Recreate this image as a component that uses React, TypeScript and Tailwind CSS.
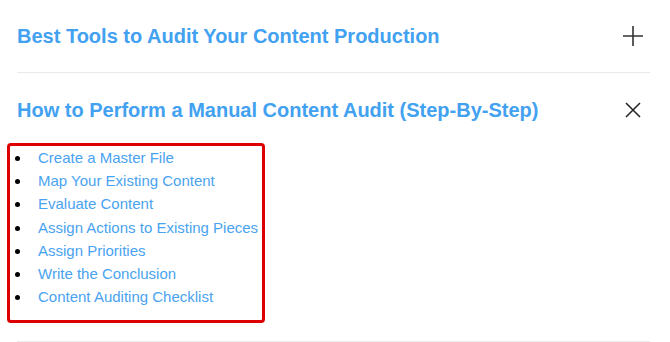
import React from 'react';

const steps = [
  'Create a Master File',
  'Map Your Existing Content',
  'Evaluate Content',
  'Assign Actions to Existing Pieces',
  'Assign Priorities',
  'Write the Conclusion',
  'Content Auditing Checklist',
];

const PlusIcon = () => (
  <svg width="20" height="20" viewBox="0 0 20 20" fill="none" stroke="#333" strokeWidth="1.6">
    <path d="M10 0v20M0 10h20" />
  </svg>
);

const CloseIcon = () => (
  <svg width="16" height="16" viewBox="0 0 16 16" fill="none" stroke="#222" strokeWidth="1.5">
    <path d="M1 1l14 14M15 1L1 15" />
  </svg>
);

const App: React.FC = () => {
  return (
    <div className="w-[670px] h-[342px] bg-white overflow-hidden" style={{ fontFamily: '"Liberation Sans", Arial, sans-serif' }}>
      <div className="ml-[17px] w-[633px]">
        {/* collapsed item */}
        <div className="border-b border-[#e9e9e9]">
          <div className="h-[72px] flex items-center justify-between pr-[7px]">
            <h3 className="text-[20px] font-bold text-[#42a1f0] leading-none">Best Tools to Audit Your Content Production</h3>
            <PlusIcon />
          </div>
        </div>

        {/* open item */}
        <div className="border-b border-[#e9e9e9]">
          <div className="h-[70px] pt-[3px] flex items-center justify-between pr-[9px]">
            <h3 className="text-[20px] font-bold text-[#42a1f0] leading-none">How to Perform a Manual Content Audit (Step-By-Step)</h3>
            <CloseIcon />
          </div>
          <div className="pb-[18px]">
            <div className="-ml-[10px] w-[258px] border-[3px] border-[#dd0000] rounded-[4px] pb-[12px]">
              <ul className="list-disc pl-[21px] text-[15px] leading-[23.2px] text-[#4aa3f0] marker:text-black">
                {steps.map((s) => (
                  <li key={s} className="pl-[7px]">{s}</li>
                ))}
              </ul>
            </div>
          </div>
        </div>
      </div>
    </div>
  );
};

export default App;
